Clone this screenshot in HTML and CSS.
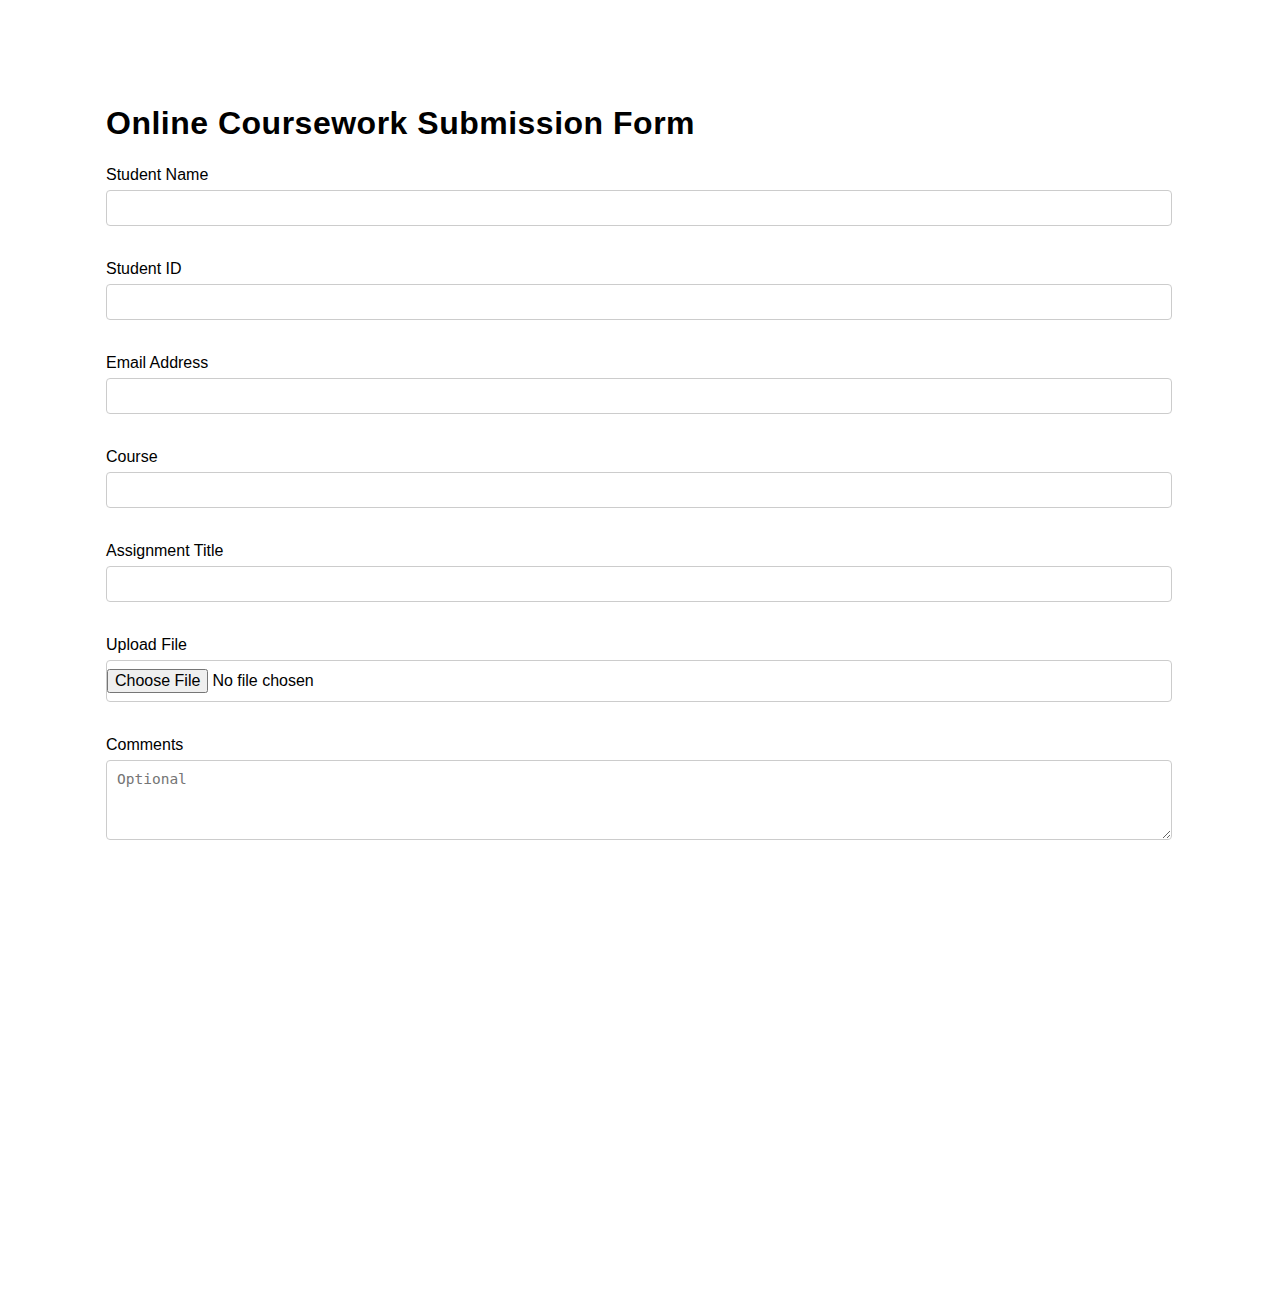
FILE: index.html
```html
<!DOCTYPE html>
<html lang="en">
<head>
  <meta charset="UTF-8">
  <meta name="viewport" content="width=device-width, initial-scale=1.0">
  <title>Online Coursework Submission Form</title>
  <link rel="stylesheet" href="styles.css">
</head>
<body>
  <div class="container">
    <h1>Online Coursework Submission Form</h1>

    <form class="submission-form">
      <div class="form-group">
        <label for="studentName">Student Name</label>
        <input type="text" id="studentName" name="studentName">
      </div>

      <div class="form-group">
        <label for="studentId">Student ID</label>
        <input type="text" id="studentId" name="studentId">
      </div>

      <div class="form-group">
        <label for="email">Email Address</label>
        <input type="email" id="email" name="email">
      </div>

      <div class="form-group">
        <label for="course">Course</label>
        <input type="text" id="course" name="course">
      </div>

      <div class="form-group">
        <label for="assignment">Assignment Title</label>
        <input type="text" id="assignment" name="assignment">
      </div>

      <div class="form-group">
        <label for="upload">Upload File</label>
        <input type="file" id="upload" name="upload" class="file-input">
      </div>

      <div class="form-group">
        <label for="comments">Comments</label>
        <textarea id="comments" name="comments" placeholder="Optional"></textarea>
      </div>
    </form>
  </div>
</body>
</html>
```

FILE: styles.css
```css
body {
  margin: 0;
  padding: 0;
  background: #fff;
  color: #000;
  font-family: 'Liberation Sans', Arial, sans-serif;
}

.container {
  max-width: 1066px;
  margin: 0 auto;
  padding-top: 105px;
}

h1 {
  font-size: 32px;
  font-weight: bold;
  letter-spacing: 0.5px;
  margin: 0 0 24px;
}

.form-group {
  margin-bottom: 34px;
}

.form-group label {
  display: block;
  font-size: 16px;
  margin-bottom: 6px;
}

.form-group input,
.form-group textarea {
  display: block;
  width: 100%;
  box-sizing: border-box;
  padding: 8px;
  font-size: 16px;
  font-family: 'Liberation Sans', Arial, sans-serif;
  border: 1px solid #ccc;
  border-radius: 4px;
}

.form-group .file-input {
  padding: 8px 0;
}

.form-group textarea {
  height: 80px;
  padding: 10px;
  font-family: 'DejaVu Sans Mono', monospace;
  font-size: 14.5px;
}
```
